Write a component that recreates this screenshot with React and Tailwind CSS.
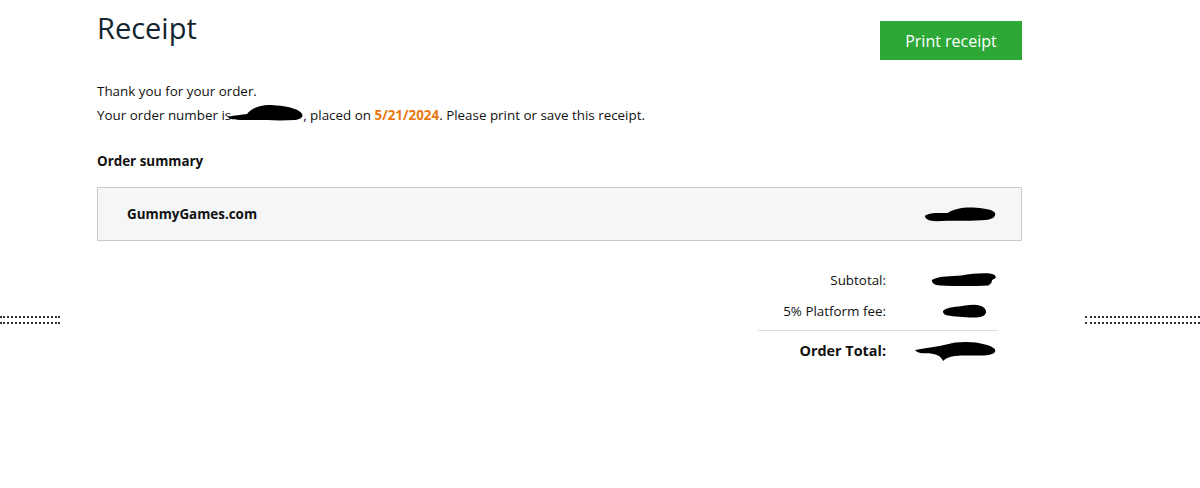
import React from 'react';

const font = { fontFamily: '"Open Sans", "Noto Sans", sans-serif' };

function Scribble({ width = 76, height = 20, variant = 0 }) {
  const shapes = [
    'M2 12 C8 8 16 9 26 9 C32 4 44 2 56 3 C66 4 74 5 76 9 C77 14 72 17 62 17 C46 18 30 17 14 18 C7 18 2 16 2 12 Z',
    'M2 10 C12 5 24 6 36 5 C48 3 60 2 70 3 C76 4 77 8 73 9 C69 11 73 13 67 16 C50 17 30 17 12 16 C5 16 2 13 2 10 Z',
    'M4 10 C10 5 22 6 34 4 C46 2 56 3 60 7 C64 11 62 16 52 17 C40 18 20 16 10 15 C5 14 4 12 4 10 Z',
    'M1 9 C12 7 22 6 30 4 C40 1 56 1 66 4 C74 6 78 9 74 12 C68 15 58 14 48 14 C38 14 31 15 27 19 C25 15 22 13 14 12 C8 12 3 12 1 9 Z',
    'M1 14 C8 12 14 12 20 11 C24 6 30 3 40 2 C52 2 66 4 72 8 C78 12 76 16 68 17 C54 18 36 17 20 17 C10 17 3 17 1 14 Z',
  ];
  return (
    <svg width={width} height={height} viewBox="0 0 78 20" preserveAspectRatio="none">
      <path d={shapes[variant]} fill="#000" />
    </svg>
  );
}

function Dots({ className }) {
  return (
    <div className={`absolute top-[316px] flex flex-col gap-[4px] ${className}`}>
      <div className="h-[1px] border-t-2 border-dotted border-[#333]" />
      <div className="h-[1px] border-t-2 border-dotted border-[#333]" />
    </div>
  );
}

export default function App() {
  return (
    <div className="relative w-[1200px] h-[488px] bg-white overflow-hidden text-[#111]" style={font}>
      <Dots className="left-0 w-[60px]" />
      <Dots className="left-[1085px] w-[115px]" />

      <div className="ml-[97px] w-[925px]">
        <div className="flex items-start justify-between">
          <h1 className="mt-[9px] text-[29px] leading-[38px] text-[#14242f]">Receipt</h1>
          <button className="mt-[21px] h-[39px] w-[142px] bg-[#2da836] text-white text-[16px]">
            Print receipt
          </button>
        </div>

        <div className="mt-[19px] text-[13.4px] leading-[24px]">
          <p>Thank you for your order.</p>
          <p className="flex items-center">
            <span>Your order number is</span>
            <span className="inline-flex w-[78px] h-[22px] -ml-[4px] -mr-[2px] -mt-[3px]">
              <Scribble width={78} height={20} variant={4} />
            </span>
            <span>, placed on&nbsp;</span>
            <span className="font-bold text-[#e8780f]">5/21/2024</span>
            <span>. Please print or save this receipt.</span>
          </p>
        </div>

        <h2 className="mt-[22px] text-[13.4px] font-bold leading-[24px]">Order summary</h2>

        <div className="mt-[14px] h-[54px] flex items-center justify-between bg-[#f5f6f8] border border-[#c8cacd] pl-[29px] pr-[24px]">
          <span className="text-[13.4px] font-bold">GummyGames.com</span>
          <Scribble width={74} height={18} variant={0} />
        </div>

        <div className="mt-[25px] flex flex-col items-end pr-[24px] text-[13.4px]">
          <div className="flex items-center h-[28px]">
            <span className="w-[300px] text-right">Subtotal:</span>
            <span className="w-[112px] flex justify-end"><Scribble width={68} height={18} variant={1} /></span>
          </div>
          <div className="flex items-center h-[28px] mt-[3px]">
            <span className="w-[300px] text-right">5% Platform fee:</span>
            <span className="w-[112px] flex justify-end"><Scribble width={58} height={18} variant={2} /></span>
          </div>
          <div className="w-[240px] border-t border-[#ddd] mt-[5px] mb-[6px]" />
          <div className="flex items-center h-[28px]">
            <span className="w-[300px] text-right text-[14.4px] font-bold">Order Total:</span>
            <span className="w-[112px] flex justify-end"><Scribble width={84} height={22} variant={3} /></span>
          </div>
        </div>
      </div>
    </div>
  );
}
